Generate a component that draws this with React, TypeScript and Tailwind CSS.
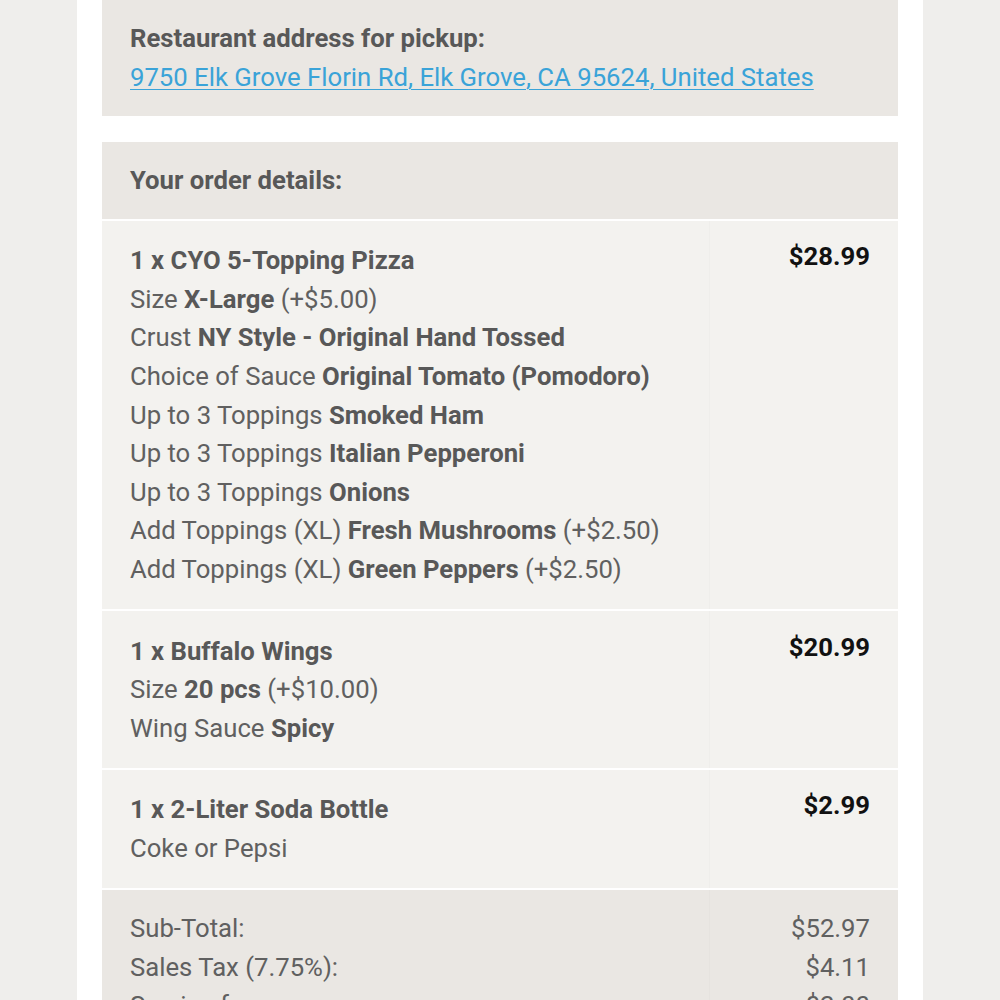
import React from 'react';

type Option = { label: string; value?: string; extra?: string };

interface Item {
  name: string;
  price: string;
  options: Option[];
}

const items: Item[] = [
  {
    name: '1 x CYO 5-Topping Pizza',
    price: '$28.99',
    options: [
      { label: 'Size', value: 'X-Large', extra: '(+$5.00)' },
      { label: 'Crust', value: 'NY Style - Original Hand Tossed' },
      { label: 'Choice of Sauce', value: 'Original Tomato (Pomodoro)' },
      { label: 'Up to 3 Toppings', value: 'Smoked Ham' },
      { label: 'Up to 3 Toppings', value: 'Italian Pepperoni' },
      { label: 'Up to 3 Toppings', value: 'Onions' },
      { label: 'Add Toppings (XL)', value: 'Fresh Mushrooms', extra: '(+$2.50)' },
      { label: 'Add Toppings (XL)', value: 'Green Peppers', extra: '(+$2.50)' },
    ],
  },
  {
    name: '1 x Buffalo Wings',
    price: '$20.99',
    options: [
      { label: 'Size', value: '20 pcs', extra: '(+$10.00)' },
      { label: 'Wing Sauce', value: 'Spicy' },
    ],
  },
  {
    name: '1 x 2-Liter Soda Bottle',
    price: '$2.99',
    options: [{ label: 'Coke or Pepsi' }],
  },
];

const totals = [
  ['Sub-Total:', '$52.97'],
  ['Sales Tax (7.75%):', '$4.11'],
  ['Service fee:', '$2.00'],
];

export default function App() {
  return (
    <div
      className="min-h-screen bg-[#efeeec] text-[25.7px] leading-[38.6px] text-[#606060]"
      style={{ fontFamily: 'Roboto, "Noto Sans", sans-serif' }}
    >
      <div className="mx-auto w-[846px] h-[1000px] overflow-hidden bg-white px-[25px]">
        {/* PICKUP ADDRESS */}
        <div className="bg-[#eae7e3] px-[28px] pt-[19px] pb-[20px]">
          <div className="font-bold text-[#585858]">Restaurant address for pickup:</div>
          <a href="#" className="text-[#3aa3d8] underline underline-offset-[3px] decoration-1">
            9750 Elk Grove Florin Rd, Elk Grove, CA 95624, United States
          </a>
        </div>

        {/* ORDER DETAILS */}
        <div className="mt-[26px] flex flex-col gap-[2px]">
          <div className="bg-[#eae7e3] px-[28px] py-[19px] font-bold text-[#585858]">
            Your order details:
          </div>

          {items.map((item) => (
            <div key={item.name} className="flex bg-[#f3f2ef]">
              <div className="flex-1 pl-[28px] py-[20.5px]">
                <div className="font-bold text-[#585858]">{item.name}</div>
                {item.options.map((opt, i) => (
                  <div key={i}>
                    {opt.label}
                    {opt.value && <span className="font-bold text-[#585858]"> {opt.value}</span>}
                    {opt.extra && <span> {opt.extra}</span>}
                  </div>
                ))}
              </div>
              <div className="w-[189px] border-l border-[#efeeeb] pr-[28px] pt-[16.5px] text-right font-bold text-[#111]">
                {item.price}
              </div>
            </div>
          ))}

          {/* TOTALS */}
          <div className="flex bg-[#eae7e3]">
            <div className="flex-1 pl-[28px] pt-[19px]">
              {totals.map(([label]) => (
                <div key={label}>{label}</div>
              ))}
            </div>
            <div className="w-[189px] border-l border-[#e6e3df] pr-[28px] pt-[19px] text-right">
              {totals.map(([label, value]) => (
                <div key={label}>{value}</div>
              ))}
            </div>
          </div>
        </div>
      </div>
    </div>
  );
}
